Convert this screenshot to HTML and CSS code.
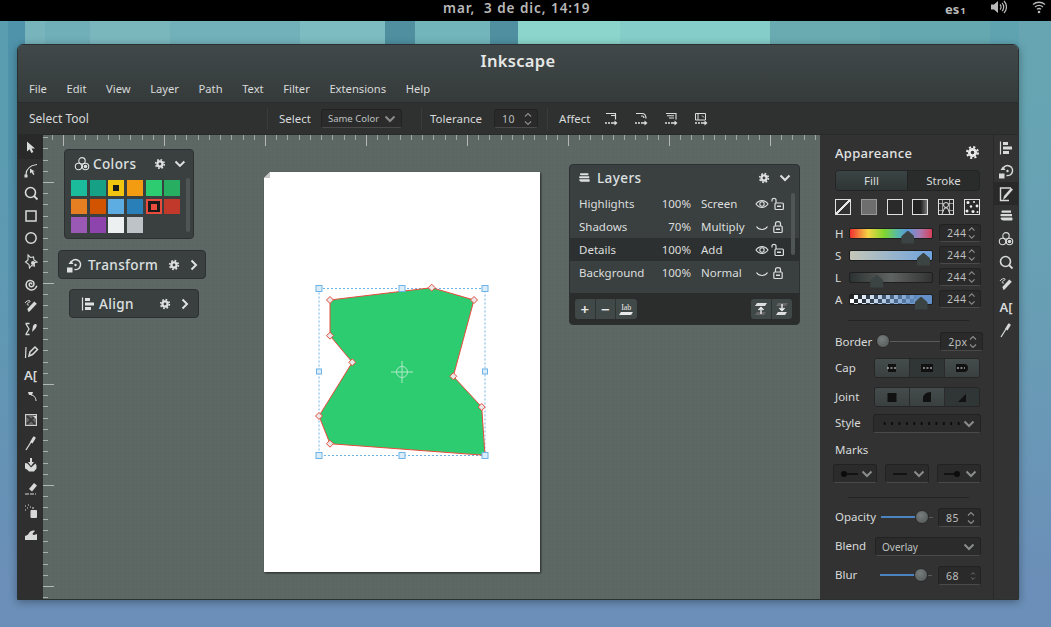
FILE: index.html
```html
<!DOCTYPE html>
<html lang="en">
<head>
  <meta charset="UTF-8">
  <title>Inkscape</title>
  <link rel="stylesheet" href="styles.css">
</head>
<body>
  <svg class="defs" width="0" height="0">
    <symbol id="gear" viewBox="0 0 16 16">
      <circle cx="8" cy="8" r="3.4" fill="none" stroke="currentColor" stroke-width="3"/>
      <circle cx="8" cy="8" r="5.8" fill="none" stroke="currentColor" stroke-width="2.2" stroke-dasharray="2.28 2.28"/>
    </symbol>
    <symbol id="chev-down" viewBox="0 0 12 12">
      <path d="M1.5 3.5 6 8l4.500-4.500" fill="none" stroke="currentColor" stroke-width="2"/>
    </symbol>
    <symbol id="chev-right" viewBox="0 0 12 12">
      <path d="M3.500 1.500 8 6l-4.500 4.500" fill="none" stroke="currentColor" stroke-width="2"/>
    </symbol>
    <symbol id="arrow" viewBox="0 0 16 16">
      <path d="M4 2.500v10l2.600-2.300 1.800 3.800 2-1-1.800-3.600h3.400z" fill="currentColor"/>
    </symbol>
    <symbol id="node" viewBox="0 0 16 16">
      <path d="M3 13C3 8 6 3.500 14 2.500" fill="none" stroke="currentColor" stroke-width="1.200"/>
      <path d="M7 6.500v5l1.500-1.200 1.800 2.700 1.200-.8-1.600-2.700h2z" fill="currentColor"/>
      <rect x="1.500" y="12.500" width="3" height="3" fill="currentColor"/>
    </symbol>
    <symbol id="zoom" viewBox="0 0 16 16">
      <circle cx="7.500" cy="7.500" r="5" fill="none" stroke="currentColor" stroke-width="1.600"/>
      <path d="M11 11l3.500 3.500" stroke="currentColor" stroke-width="1.800"/>
    </symbol>
    <symbol id="rect" viewBox="0 0 16 16">
      <rect x="3" y="3" width="10" height="10" fill="none" stroke="currentColor" stroke-width="1.500"/>
    </symbol>
    <symbol id="circle" viewBox="0 0 16 16">
      <circle cx="8" cy="8" r="5.200" fill="none" stroke="currentColor" stroke-width="1.500"/>
    </symbol>
    <symbol id="star" viewBox="0 0 16 16">
      <path d="M5 2l2.500 2.500 3-.5 .5 3 3 2-3 1 .5 3-3-.5-2 2.500-.5-3.500-3.500-2.500 2.500-2z" fill="none" stroke="currentColor" stroke-width="1.100"/>
      <circle cx="10" cy="10" r="2" fill="currentColor"/>
    </symbol>
    <symbol id="spiral" viewBox="0 0 16 16">
      <path d="M8.500 8.500c.8-1-.8-2.200-2-1-1 1.500.3 3.500 2.200 3.300 2.300-.4 3-3.200 1.600-5C8.500 3.800 5 4 3.600 6.500 2.200 9.400 3.800 13 7 13.800c3 .6 6-1 6.800-4" fill="none" stroke="currentColor" stroke-width="1.500"/>
    </symbol>
    <symbol id="pencil" viewBox="0 0 16 16">
      <path d="M5.500 14l-1.200-3 7-7.500 2.500 2.200-7 7.500z" fill="currentColor"/>
      <path d="M2 5c1-2 4-3 5-2s-3 2-3 3 1 1 2 1" fill="none" stroke="currentColor"/>
    </symbol>
    <symbol id="bezier" viewBox="0 0 16 16">
      <path d="M2.500 2.500h4M2.500 13.500h4M3 3l3 5-3 5" fill="none" stroke="currentColor" stroke-width="1.300"/>
      <path d="M9 11l1-6c1-2 3-2.500 3.500-1.500s0 3-1.500 4.500z" fill="currentColor"/>
    </symbol>
    <symbol id="pen" viewBox="0 0 16 16">
      <path d="M3 3l-.5 11" fill="none" stroke="currentColor" stroke-width="1.200"/>
      <path d="M6 12l1-4 5-5 2.500 2.500-5 5z" fill="none" stroke="currentColor" stroke-width="1.500"/>
    </symbol>
    <symbol id="measure" viewBox="0 0 16 16">
      <path d="M5 3h5l-1 3H6z" fill="currentColor"/>
      <path d="M8 6c3 0 5 3 5 6" fill="none" stroke="currentColor"/>
    </symbol>
    <symbol id="gradient" viewBox="0 0 16 16">
      <rect x="2.500" y="2.500" width="11" height="11" fill="#6a6a6a" stroke="#cfcfcf"/>
      <path d="M4 4l8 8M12 4l-8 8" stroke="#3a3a3a" stroke-width="2"/>
      <path d="M10 4h3v3z" fill="#ddd"/>
    </symbol>
    <symbol id="dropper" viewBox="0 0 16 16">
      <path d="M3 15l5-8" stroke="currentColor" stroke-width="1.300"/>
      <path d="M7 7l3-5c1-1 3 0 2.500 1.500L9.500 8.500z" fill="currentColor"/>
    </symbol>
    <symbol id="bucket" viewBox="0 0 16 16">
      <path d="M7 1h2v4h2l-3 4-3-4h2z" fill="currentColor"/>
      <path d="M2 6l2.500.5 3.500 4 4.500-4 1 2v3l-2.500 3H6l-2-2-2-1z" fill="currentColor"/>
    </symbol>
    <symbol id="eraser" viewBox="0 0 16 16">
      <path d="M6 9l5-6 3 2.500-5 6z" fill="currentColor"/>
      <path d="M2 14h11" stroke="currentColor" stroke-dasharray="4 1"/>
    </symbol>
    <symbol id="spray" viewBox="0 0 16 16">
      <rect x="7.500" y="7" width="6.500" height="8" rx="1" fill="currentColor"/>
      <path d="M2 3h1M4 5h1M2 7h1M5 2h1M7 4h1M9 5h2" stroke="currentColor"/>
    </symbol>
    <symbol id="wave" viewBox="0 0 16 16">
      <path d="M2 15v-4c2-1 3-1 4-3s4-3 6-2l-2 2c-1 1 0 2 1 2l3-1v6z" fill="currentColor"/>
    </symbol>
    <symbol id="align" viewBox="0 0 16 16">
      <path d="M2.500 1.500v13" stroke="currentColor" stroke-width="1.200"/>
      <path d="M5 2h5v3H5zM5 6.500h9v3H5zM5 11h6v3H5z" fill="currentColor"/>
    </symbol>
    <symbol id="transform" viewBox="0 0 16 16">
      <path d="M5 5.500a5 5 0 1 1 3.500 7" fill="none" stroke="currentColor" stroke-width="1.500"/>
      <path d="M2.500 7h5L5 3.500z" fill="currentColor"/>
      <circle cx="9.500" cy="8" r="1.200" fill="currentColor"/>
      <rect x="1" y="10.500" width="5.500" height="5" fill="currentColor"/>
    </symbol>
    <symbol id="fillstroke" viewBox="0 0 16 16">
      <path d="M13 2H2.500v12.500H11" fill="none" stroke="currentColor" stroke-width="1.400"/>
      <path d="M5 14l1-4 7-8 2 1.500-7 8z" fill="currentColor"/>
    </symbol>
    <symbol id="layers" viewBox="0 0 16 16">
      <path d="M4.500 2.500h8.500v2.300H4.500C3 4.800 3 2.500 4.500 2.500zM3.500 5.900H14v2.400H3.500C2 8.300 2 5.900 3.500 5.900zM3.500 9.400H14c.8 1 .8 2 0 3H5.500c-2.500 0-4-3-2-3z" fill="currentColor"/>
    </symbol>
    <symbol id="colors" viewBox="0 0 16 16">
      <circle cx="8" cy="4.800" r="3.200" fill="none" stroke="currentColor" stroke-width="1.100"/>
      <circle cx="4.500" cy="10.500" r="3.200" fill="none" stroke="currentColor" stroke-width="1.100"/>
      <circle cx="11.500" cy="10.500" r="3.200" fill="none" stroke="currentColor" stroke-width="1.100"/>
      <circle cx="11.500" cy="10.500" r="1.800" fill="currentColor"/>
    </symbol>
    <symbol id="eye" viewBox="0 0 14 14">
      <path d="M1 7c3-4.500 9-4.500 12 0-3 4.500-9 4.500-12 0z" fill="none" stroke="currentColor" stroke-width="1.100"/>
      <circle cx="7" cy="7" r="2.200" fill="none" stroke="currentColor" stroke-width="1.100"/>
    </symbol>
    <symbol id="eye-off" viewBox="0 0 14 14">
      <path d="M1.500 6.500c2.500 4 8.500 4 11 0" fill="none" stroke="currentColor" stroke-width="1.100"/>
    </symbol>
    <symbol id="lock" viewBox="0 0 14 14">
      <path d="M4.500 6V3.500c0-2.500 5-2.500 5 0V6" fill="none" stroke="currentColor" stroke-width="1.200"/>
      <rect x="2.800" y="6" width="8.400" height="6.500" rx="1" fill="none" stroke="currentColor" stroke-width="1.200"/>
      <path d="M5 9.200h4" stroke="currentColor" stroke-width="1.500"/>
    </symbol>
    <symbol id="unlock" viewBox="0 0 14 14">
      <path d="M1 4.500V2.800c0-2 4-2 4 0V6" fill="none" stroke="currentColor" stroke-width="1.200"/>
      <rect x="4" y="6" width="8.400" height="6.500" rx="1" fill="none" stroke="currentColor" stroke-width="1.200"/>
      <path d="M6 9.200h4" stroke="currentColor" stroke-width="1.500"/>
    </symbol>
    <symbol id="affect-a" viewBox="0 0 14 14">
      <path d="M2 1.500h10M7 3.500h5M11.500 1.500v6" fill="none" stroke="currentColor" stroke-width="1.200"/>
      <path d="M1 11h2M4 11h2M7 11h4" stroke="currentColor" stroke-width="1.300"/>
      <path d="M10.500 8.500l3 2.500-3 2.500z" fill="currentColor"/>
    </symbol>
    <symbol id="affect-b" viewBox="0 0 14 14">
      <path d="M2 1.500h6c3 0 4 2 4 5M7 4h1c2 0 2 1 2 2" fill="none" stroke="currentColor" stroke-width="1.200"/>
      <path d="M1 11h2M4 11h2M7 11h4" stroke="currentColor" stroke-width="1.300"/>
      <path d="M10.500 8.500l3 2.500-3 2.500z" fill="currentColor"/>
    </symbol>
    <symbol id="affect-c" viewBox="0 0 14 14">
      <path d="M2 1.500h10v6M3 3.800h7M5 6h5" fill="none" stroke="currentColor" stroke-width="1.100"/>
      <path d="M1 11h2M4 11h2M7 11h4" stroke="currentColor" stroke-width="1.300"/>
      <path d="M10.500 8.500l3 2.500-3 2.500z" fill="currentColor"/>
    </symbol>
    <symbol id="affect-d" viewBox="0 0 14 14">
      <path d="M1.500 1.500h10v6.500h-10zM4 1.500v6.500M8 3.500l2 2" fill="none" stroke="currentColor" stroke-width="1"/>
      <path d="M1 11h2M4 11h2M7 11h4" stroke="currentColor" stroke-width="1.300"/>
      <path d="M10.500 8.500l3 2.500-3 2.500z" fill="currentColor"/>
    </symbol>
    <symbol id="spin" viewBox="0 0 10 16">
      <path d="M2 5.500l3-3 3 3M2 10.500l3 3 3-3" fill="none" stroke="currentColor" stroke-width="1.200"/>
    </symbol>
  </svg>

  <div class="topbar">
    <span class="clock">mar,&nbsp; 3 de dic, 14:19</span>
    <span class="keyboard">es<small>1</small></span>
    <svg class="tray-volume" viewBox="0 0 16 14" width="16" height="14">
      <path d="M0 4.500h3L7 1v12L3 9.500H0z" fill="currentColor"/>
      <path d="M9 4.500a3.500 3.500 0 0 1 0 5M11 2.800a6 6 0 0 1 0 8.400M13 1a8.500 8.500 0 0 1 0 12" fill="none" stroke="currentColor" stroke-width="1.200"/>
    </svg>
    <svg class="tray-wifi" viewBox="0 0 14 14" width="14" height="14">
      <path d="M1 4.500c3.500-3 8.500-3 12 0M3 7c2.500-2 5.500-2 8 0M5 9.300c1.300-1 2.700-1 4 0" fill="none" stroke="currentColor" stroke-width="1.300"/>
      <circle cx="7" cy="12" r="1.300" fill="currentColor"/>
    </svg>
  </div>

  <div class="desktop">
    <div class="window">
      <div class="header">
        <div class="title">Inkscape</div>
        <div class="menu">
          <span>File</span><span>Edit</span><span>View</span><span>Layer</span><span>Path</span><span>Text</span><span>Filter</span><span>Extensions</span><span>Help</span>
        </div>
      </div>

      <div class="toolbar">
        <span class="tool-name">Select Tool</span>
        <span class="divider"></span>
        <span class="tb-label">Select</span>
        <div class="combo combo-same"><span>Same Color</span><svg class="caret"><use href="#chev-down"/></svg></div>
        <span class="divider divider-2"></span>
        <span class="tb-label">Tolerance</span>
        <div class="spin spin-tol"><span>10</span><svg class="spin-arrows"><use href="#spin"/></svg></div>
        <span class="divider divider-3"></span>
        <span class="tb-label">Affect</span>
        <div class="affect">
          <svg><use href="#affect-a"/></svg>
          <svg><use href="#affect-b"/></svg>
          <svg><use href="#affect-c"/></svg>
          <svg><use href="#affect-d"/></svg>
        </div>
      </div>

      <div class="main">
        <div class="tools">
          <div class="tool active"><svg><use href="#arrow"/></svg></div>
          <div class="tool"><svg><use href="#node"/></svg></div>
          <div class="tool"><svg><use href="#zoom"/></svg></div>
          <div class="tool"><svg><use href="#rect"/></svg></div>
          <div class="tool"><svg><use href="#circle"/></svg></div>
          <div class="tool"><svg><use href="#star"/></svg></div>
          <div class="tool"><svg><use href="#spiral"/></svg></div>
          <div class="tool"><svg><use href="#pencil"/></svg></div>
          <div class="tool"><svg><use href="#bezier"/></svg></div>
          <div class="tool"><svg><use href="#pen"/></svg></div>
          <div class="tool tool-text">A[</div>
          <div class="tool"><svg><use href="#measure"/></svg></div>
          <div class="tool"><svg><use href="#gradient"/></svg></div>
          <div class="tool"><svg><use href="#dropper"/></svg></div>
          <div class="tool"><svg><use href="#bucket"/></svg></div>
          <div class="tool"><svg><use href="#eraser"/></svg></div>
          <div class="tool"><svg><use href="#spray"/></svg></div>
          <div class="tool"><svg><use href="#wave"/></svg></div>
        </div>

        <div class="canvas">
          <div class="ruler-top"></div>
          <div class="ruler-left"></div>

          <div class="page-shadow">
            <div class="page">
              <svg class="drawing" viewBox="264 172 276 400">
                <path class="fold" d="M264 178h6v-6z"/>
                <rect x="319" y="288.500" width="166" height="167" fill="none" stroke="#6db3e8" stroke-dasharray="2 2"/>
                <path class="shape" d="M330 300 431.700 287.700 474 300 453.300 376.300 481.700 407 485 455.300 330 443.700 319 416 352.300 362.300 330 335.700z"/>
                <g class="cross">
                  <circle cx="402" cy="372" r="5.500"/>
                  <path d="M391 372h22M402 361v22"/>
                </g>
                <g class="nodes">
                  <path d="M330 296.500l3.500 3.500-3.500 3.500-3.500-3.500z"/>
                  <path d="M431.700 284.200l3.500 3.500-3.500 3.500-3.500-3.500z"/>
                  <path d="M474 296.500l3.500 3.500-3.500 3.500-3.500-3.500z"/>
                  <path d="M453.300 372.800l3.500 3.500-3.500 3.500-3.500-3.500z"/>
                  <path d="M481.700 403.500l3.500 3.500-3.500 3.500-3.500-3.500z"/>
                  <path d="M330 440.200l3.500 3.500-3.500 3.500-3.500-3.500z"/>
                  <path d="M319 412.500l3.500 3.500-3.500 3.500-3.500-3.500z"/>
                  <path d="M352.300 358.800l3.500 3.500-3.500 3.500-3.500-3.500z"/>
                  <path d="M330 332.200l3.500 3.500-3.500 3.500-3.500-3.500z"/>
                </g>
                <g class="handles">
                  <rect x="316" y="285.500" width="6" height="6"/>
                  <rect x="399" y="285.500" width="6" height="6"/>
                  <rect x="482" y="285.500" width="6" height="6"/>
                  <rect x="316.500" y="369" width="5" height="5"/>
                  <rect x="482.500" y="369" width="5" height="5"/>
                  <rect x="316" y="452.500" width="6" height="6"/>
                  <rect x="399" y="452.500" width="6" height="6"/>
                  <rect x="482" y="452.500" width="6" height="6"/>
                </g>
              </svg>
            </div>
          </div>

          <div class="float colors-panel">
            <div class="float-head">
              <svg class="head-ico"><use href="#colors"/></svg>
              <span class="float-title">Colors</span>
              <svg class="gear"><use href="#gear"/></svg>
              <svg class="chev"><use href="#chev-down"/></svg>
            </div>
            <div class="swatches">
              <i class="sw sw-1"></i><i class="sw sw-2"></i><i class="sw sw-3 marked"></i><i class="sw sw-4"></i><i class="sw sw-5"></i><i class="sw sw-6"></i>
              <i class="sw sw-7"></i><i class="sw sw-8"></i><i class="sw sw-9"></i><i class="sw sw-10"></i><i class="sw sw-11 picked"></i><i class="sw sw-12"></i>
              <i class="sw sw-13"></i><i class="sw sw-14"></i><i class="sw sw-15"></i><i class="sw sw-16"></i>
            </div>
            <div class="scroll colors-scroll"></div>
          </div>

          <div class="float pill transform-panel">
            <svg class="head-ico"><use href="#transform"/></svg>
            <span class="float-title">Transform</span>
            <svg class="gear"><use href="#gear"/></svg>
            <svg class="chev"><use href="#chev-right"/></svg>
          </div>

          <div class="float pill align-panel">
            <svg class="head-ico"><use href="#align"/></svg>
            <span class="float-title">Align</span>
            <svg class="gear"><use href="#gear"/></svg>
            <svg class="chev"><use href="#chev-right"/></svg>
          </div>

          <div class="float layers-panel">
            <div class="float-head">
              <svg class="head-ico"><use href="#layers"/></svg>
              <span class="float-title">Layers</span>
              <svg class="gear"><use href="#gear"/></svg>
              <svg class="chev"><use href="#chev-down"/></svg>
            </div>
            <div class="layer-list">
              <div class="layer"><span class="l-name">Highlights</span><span class="l-pct">100%</span><span class="l-mode">Screen</span><svg><use href="#eye"/></svg><svg><use href="#unlock"/></svg></div>
              <div class="layer"><span class="l-name">Shadows</span><span class="l-pct">70%</span><span class="l-mode">Multiply</span><svg><use href="#eye-off"/></svg><svg><use href="#lock"/></svg></div>
              <div class="layer selected"><span class="l-name">Details</span><span class="l-pct">100%</span><span class="l-mode">Add</span><svg><use href="#eye"/></svg><svg><use href="#unlock"/></svg></div>
              <div class="layer"><span class="l-name">Background</span><span class="l-pct">100%</span><span class="l-mode">Normal</span><svg><use href="#eye-off"/></svg><svg><use href="#lock"/></svg></div>
              <div class="scroll layers-scroll"></div>
            </div>
            <div class="layer-foot">
              <div class="btn-group">
                <button>+</button><button>&minus;</button><button class="btn-iab"><span>Iab</span><i></i></button>
              </div>
              <div class="btn-group">
                <button>
                  <svg viewBox="0 0 16 16" width="16" height="16"><path d="M4 2h10l-2 3H2z" fill="#ddd"/><path d="M4 11h9l-2 3H2z" fill="#666"/><path d="M8 13V7M5.500 9 8 6.500 10.500 9" fill="none" stroke="#eee" stroke-width="1.400"/></svg>
                </button><button>
                  <svg viewBox="0 0 16 16" width="16" height="16"><path d="M4 2h10l-2 3H2z" fill="#666"/><path d="M4 11h9l-2 3H2z" fill="#ddd"/><path d="M8 3v6M5.500 7 8 9.500 10.500 7" fill="none" stroke="#eee" stroke-width="1.400"/></svg>
                </button>
              </div>
            </div>
          </div>
        </div>

        <div class="panel">
          <div class="panel-head">
            <span class="panel-title">Appareance</span>
            <svg class="gear-big"><use href="#gear"/></svg>
          </div>
          <div class="tabs"><span class="tab active">Fill</span><span class="tab">Stroke</span></div>
          <div class="paints">
            <i class="paint p-none"></i><i class="paint p-flat"></i><i class="paint p-dark"></i><i class="paint p-grad"></i>
            <svg class="paint" viewBox="0 0 14 14"><rect width="14" height="14" fill="#2a2a2a"/><path d="M0 3.500h14M0 10.500h14M3.500 0v14M10.500 0v14" stroke="#bbb" stroke-width=".8"/><circle cx="7" cy="5" r="2.500" fill="#2a2a2a" stroke="#ddd"/><path d="M3 14l2.500-6h3L11 14" fill="#2a2a2a" stroke="#ddd"/></svg>
            <svg class="paint" viewBox="0 0 14 14"><rect width="14" height="14" fill="#2a2a2a"/><g fill="#eee"><circle cx="3" cy="2.500" r="1.500"/><circle cx="9" cy="2" r="1"/><circle cx="12" cy="6" r="1.400"/><circle cx="6" cy="6.500" r="1.200"/><circle cx="2" cy="11" r="1.500"/><circle cx="8" cy="11.500" r="1.500"/><circle cx="12.500" cy="12" r="1"/></g></svg>
          </div>
          <div class="channels">
            <div class="channel"><span class="ch-label">H</span><div class="bar bar-h"><i class="thumb" style="left:70%"></i></div><div class="spin"><span>244</span><svg class="spin-arrows"><use href="#spin"/></svg></div></div>
            <div class="channel"><span class="ch-label">S</span><div class="bar bar-s"><i class="thumb" style="left:89%"></i></div><div class="spin"><span>244</span><svg class="spin-arrows"><use href="#spin"/></svg></div></div>
            <div class="channel"><span class="ch-label">L</span><div class="bar bar-l"><i class="thumb" style="left:32%"></i></div><div class="spin"><span>244</span><svg class="spin-arrows"><use href="#spin"/></svg></div></div>
            <div class="channel"><span class="ch-label">A</span><div class="bar bar-a"><i class="thumb" style="left:86%"></i></div><div class="spin"><span>244</span><svg class="spin-arrows"><use href="#spin"/></svg></div></div>
          </div>
          <div class="sep sep-1"></div>

          <div class="prop prop-border">
            <span>Border</span>
            <div class="slider slider-border"><i class="knob" style="left:2%"></i></div>
            <div class="spin"><span>2px</span><svg class="spin-arrows"><use href="#spin"/></svg></div>
          </div>
          <div class="prop prop-cap">
            <span>Cap</span>
            <div class="seg">
              <button><svg viewBox="0 0 16 10" width="16" height="10"><rect x="4" y="1" width="8" height="8" fill="#111"/><path d="M3 5h10" stroke="#eee" stroke-dasharray="2 1.500"/></svg></button>
              <button class="on"><svg viewBox="0 0 16 10" width="16" height="10"><rect x="2" y="1" width="12" height="8" fill="#111"/><path d="M4 5h9" stroke="#eee" stroke-dasharray="2 1.500"/></svg></button>
              <button><svg viewBox="0 0 16 10" width="16" height="10"><path d="M2 1h8a4 4 0 0 1 0 8H2z" fill="#111"/><path d="M3 5h8" stroke="#eee" stroke-dasharray="2 1.500"/></svg></button>
            </div>
          </div>
          <div class="prop prop-joint">
            <span>Joint</span>
            <div class="seg">
              <button><svg viewBox="0 0 12 10" width="12" height="10"><rect x="1.500" y="1" width="9" height="9" fill="#111"/></svg></button>
              <button><svg viewBox="0 0 12 10" width="12" height="10"><path d="M2 10V6c0-3 3-6 8-6v10z" fill="#111"/></svg></button>
              <button class="on"><svg viewBox="0 0 12 10" width="12" height="10"><path d="M2 10 10 2v8z" fill="#111"/></svg></button>
            </div>
          </div>
          <div class="prop prop-style">
            <span>Style</span>
            <div class="combo combo-style"><span class="dots"></span><svg class="caret"><use href="#chev-down"/></svg></div>
          </div>
          <div class="marks-label">Marks</div>
          <div class="marks">
            <div class="combo"><svg class="mark" viewBox="0 0 20 8"><circle cx="5" cy="4" r="3" fill="#0c0c0c"/><path d="M5 4h14" stroke="#0c0c0c" stroke-width="1.500"/></svg><svg class="caret"><use href="#chev-down"/></svg></div>
            <div class="combo"><svg class="mark" viewBox="0 0 20 8"><path d="M2 4h14" stroke="#0c0c0c" stroke-width="1.500"/></svg><svg class="caret"><use href="#chev-down"/></svg></div>
            <div class="combo"><svg class="mark" viewBox="0 0 20 8"><circle cx="14" cy="4" r="3" fill="#0c0c0c"/><path d="M1 4h13" stroke="#0c0c0c" stroke-width="1.500"/></svg><svg class="caret"><use href="#chev-down"/></svg></div>
          </div>
          <div class="sep sep-2"></div>
          <div class="prop prop-opacity">
            <span>Opacity</span>
            <div class="slider slider-blue"><i class="fill"></i><i class="knob" style="left:78%"></i></div>
            <div class="spin"><span>85</span><svg class="spin-arrows"><use href="#spin"/></svg></div>
          </div>
          <div class="prop prop-blend">
            <span>Blend</span>
            <div class="combo combo-blend"><span>Overlay</span><svg class="caret"><use href="#chev-down"/></svg></div>
          </div>
          <div class="prop prop-blur">
            <span>Blur</span>
            <div class="slider slider-blue"><i class="fill"></i><i class="knob" style="left:78%"></i></div>
            <div class="spin"><span>68</span><svg class="spin-arrows"><use href="#spin"/></svg></div>
          </div>
        </div>

        <div class="strip">
          <div class="tool"><svg><use href="#align"/></svg></div>
          <div class="tool"><svg><use href="#transform"/></svg></div>
          <div class="tool active"><svg><use href="#fillstroke"/></svg></div>
          <div class="tool"><svg><use href="#layers"/></svg></div>
          <div class="tool"><svg><use href="#colors"/></svg></div>
          <div class="tool"><svg><use href="#zoom"/></svg></div>
          <div class="tool"><svg><use href="#pencil"/></svg></div>
          <div class="tool tool-text">A[</div>
          <div class="tool"><svg><use href="#dropper"/></svg></div>
        </div>
      </div>
    </div>
  </div>
</body>
</html>
```

FILE: styles.css
```css
* {
  box-sizing: border-box;
}
html, body {
  margin: 0;
  height: 627px;
  overflow: hidden;
}
body {
  font-family: "Noto Sans", sans-serif;
  font-size: 11.5px;
  color: #d8dada;
  display: flex;
  flex-direction: column;
  background: #000;
}
.defs {
  position: absolute;
}
svg {
  display: block;
}
i {
  display: block;
  font-style: normal;
}

/* top bar */
.topbar {
  height: 21px;
  background: #000;
  color: #b9b9b9;
  position: relative;
  flex: none;
}
.clock {
  position: absolute;
  left: 443px;
  top: 0;
  font-weight: 600;
  font-size: 13.5px;
  line-height: 17px;
  letter-spacing: 0.95px;
}
.keyboard {
  position: absolute;
  left: 945px;
  top: 1px;
  font-weight: 700;
  font-size: 13px;
  line-height: 17px;
}
.keyboard small {
  font-size: 9.5px;
  margin-left: 1px;
}
.tray-volume {
  position: absolute;
  left: 991px;
  top: 0;
}
.tray-wifi {
  position: absolute;
  left: 1032px;
  top: 0;
}

/* desktop */
.desktop {
  flex: 1;
  padding: 23px 32px 27px 17px;
  background:
    linear-gradient(180deg, rgba(107, 143, 184, 0) 12%, rgba(107, 143, 184, 0.35) 50%, #6b8fb8 92%),
    linear-gradient(90deg, #5a9db0 0 8px, #4f93aa 8px 25px, #78b4bc 25px 45px, #70aeb8 45px 90px, #7ab7bd 90px 170px, #72b1ba 170px 300px, #7dbcc0 300px 385px, #4f8fa0 385px 415px, #72b5bb 415px 490px, #4f8fa0 490px 518px, #8bd5cc 518px 620px, #84cdc8 620px 770px, #6aabb2 770px 880px, #66a8b0 880px 990px, #5fa3b1 990px 1019px, #67a5b3 1019px);
}
.window {
  height: 556px;
  display: flex;
  flex-direction: column;
  border: 1px solid #2b3131;
  border-radius: 6px 6px 0 0;
  overflow: hidden;
  box-shadow: 0 2px 8px rgba(0, 0, 0, 0.35);
}
.header {
  height: 58px;
  background: linear-gradient(180deg, #414849, #353b3b);
  border-bottom: 1px solid #2a2d2d;
  flex: none;
}
.title {
  text-align: center;
  font-size: 16.5px;
  font-weight: 600;
  line-height: 20px;
  padding-top: 6px;
  height: 26px;
  color: #e6e8e8;
  letter-spacing: 0.3px;
}
.menu {
  display: flex;
  gap: 19.6px;
  padding-left: 11px;
  font-size: 11.2px;
  line-height: 24px;
  margin-top: 6px;
}

/* toolbar */
.toolbar {
  height: 32px;
  background: #2f3131;
  border-bottom: 1px solid #282a2a;
  display: flex;
  align-items: center;
  padding-left: 11px;
  flex: none;
}
.tool-name {
  width: 238px;
  font-size: 12px;
}
.divider {
  width: 1px;
  height: 22px;
  background: #3a3c3c;
  margin-right: 11px;
}
.divider-2 {
  margin-left: 19px;
  margin-right: 8px;
}
.divider-3 {
  margin-left: 9px;
  margin-right: 11px;
}
.tb-label {
  margin-right: 10px;
}
.combo {
  display: flex;
  align-items: center;
  justify-content: space-between;
  height: 19px;
  padding: 0 5px 0 6px;
  background: #2b2b2b;
  border: 1px solid #222;
  border-bottom-color: #4a4a4a;
  border-radius: 3px;
  font-size: 9.5px;
  color: #bfc1c1;
}
.combo-same {
  width: 81px;
}
.caret {
  width: 12px;
  height: 12px;
  color: #8a8c8c;
}
.spin {
  width: 43px;
  height: 19px;
  display: flex;
  align-items: center;
  justify-content: space-between;
  padding: 0 4px 0 7px;
  background: #2a2a2a;
  border: 1px solid #222;
  border-bottom-color: #4a4a4a;
  border-radius: 3px;
  font-size: 10.5px;
  letter-spacing: 0.5px;
  color: #bdbfbf;
  flex: none;
}
.spin-arrows {
  width: 10px;
  height: 16px;
  color: #8a8c8c;
}
.spin-tol {
  width: 44px;
  margin-left: 2px;
}
.affect {
  display: flex;
  gap: 16px;
  margin-left: 4px;
  color: #dcdede;
}
.affect svg {
  width: 14px;
  height: 14px;
}

/* main */
.main {
  flex: 1;
  display: flex;
  min-height: 0;
}
.tools {
  width: 25px;
  background: #2f2f2f;
  flex: none;
}
.tool {
  height: 22.7px;
  display: flex;
  align-items: center;
  justify-content: center;
  color: #d8dada;
}
.tool svg {
  width: 16px;
  height: 16px;
}
.tools .tool.active {
  background: #292929;
  height: 24px;
}
.tool-text {
  font-size: 13px;
  font-weight: 600;
}

/* canvas */
.canvas {
  position: relative;
  width: 777px;
  flex: none;
  overflow: hidden;
  background-color: #5d6764;
  background-image: radial-gradient(#5b6562 1px, transparent 1.2px);
  background-size: 4px 4px;
}
.ruler-top {
  position: absolute;
  left: 0;
  right: 0;
  top: 0;
  height: 11px;
  background:
    repeating-linear-gradient(90deg, #b3b8b6 0 1px, transparent 1px 101px) 20px 0 / 101px 11px repeat-x,
    repeating-linear-gradient(90deg, #a2a7a5 0 1px, transparent 1px 11.22px) 20px 0 / 101px 5px repeat-x;
}
.ruler-left {
  position: absolute;
  left: 0;
  top: 0;
  bottom: 0;
  width: 11px;
  background:
    repeating-linear-gradient(180deg, #b3b8b6 0 1px, transparent 1px 101px) 0 47px / 11px 101px repeat-y,
    repeating-linear-gradient(180deg, #a9aeac 0 1px, transparent 1px 11.22px) 0 47px / 5px 101px repeat-y;
}
.page-shadow {
  position: absolute;
  left: 221px;
  top: 37px;
  filter: drop-shadow(1px 1px 1px rgba(0, 0, 0, 0.6));
}
.page {
  width: 276px;
  height: 400px;
  background: #fff;
  clip-path: polygon(6px 0, 100% 0, 100% 100%, 0 100%, 0 6px);
}
.drawing {
  width: 276px;
  height: 400px;
}
.fold {
  fill: #c8c8c8;
}
.shape {
  fill: #2ecc71;
  stroke: #e74c3c;
  stroke-width: 1;
}
.cross {
  fill: none;
  stroke: #aee9c8;
  stroke-width: 1;
}
.nodes path {
  fill: #e8e8e8;
  stroke: #e74c3c;
}
.handles rect {
  fill: #d9ecf8;
  stroke: #6db3e8;
}

/* floating panels */
.float {
  position: absolute;
  background: #3a4040;
  border: 1px solid #2c3030;
  border-radius: 4px;
  color: #dfe1e1;
}
.float-title {
  font-size: 13.5px;
  font-weight: 500;
  letter-spacing: 0.4px;
}
.head-ico {
  width: 16px;
  height: 16px;
  flex: none;
}
.gear {
  width: 12px;
  height: 12px;
}
.chev {
  width: 12px;
  height: 12px;
}
.float-head {
  display: flex;
  align-items: center;
  height: 26px;
}
.colors-panel {
  left: 21px;
  top: 14px;
  width: 130px;
  height: 90px;
}
.colors-panel .float-head {
  padding: 0 7px 0 9px;
  margin-top: 1px;
}
.colors-panel .float-title {
  margin-left: 3px;
  width: 62px;
}
.colors-panel .chev {
  margin-left: 8px;
}
.swatches {
  display: grid;
  grid-template-columns: repeat(6, 16px);
  grid-auto-rows: 15.5px;
  gap: 3px 2.7px;
  margin: 3px 0 0 6px;
}
.sw {
  position: relative;
}
.sw-1 { background: #1abc9c; }
.sw-2 { background: #16a085; }
.sw-3 { background: #f1c40f; }
.sw-4 { background: #f39c12; }
.sw-5 { background: #2ecc71; }
.sw-6 { background: #27ae60; }
.sw-7 { background: #e67e22; }
.sw-8 { background: #d35400; }
.sw-9 { background: #5dade2; }
.sw-10 { background: #2980b9; }
.sw-11 { background: #e74c3c; }
.sw-12 { background: #c0392b; }
.sw-13 { background: #9b59b6; }
.sw-14 { background: #8e44ad; }
.sw-15 { background: #ecf0f1; }
.sw-16 { background: #bdc3c7; }
.marked::after {
  content: "";
  position: absolute;
  left: 5px;
  top: 5px;
  width: 6px;
  height: 6px;
  background: #1a1a1a;
}
.picked {
  background: #1a1a1a;
  border: 2px solid #e74c3c;
}
.picked::after {
  content: "";
  position: absolute;
  left: 3px;
  top: 3px;
  width: 6px;
  height: 6px;
  background: #e74c3c;
}
.scroll {
  position: absolute;
  background: #4f5454;
  border-radius: 2px;
  width: 4px;
}
.colors-scroll {
  left: 121px;
  top: 28px;
  height: 54px;
}
.pill {
  display: flex;
  align-items: center;
  height: 29px;
  padding-left: 7px;
}
.transform-panel {
  left: 15px;
  top: 115px;
  width: 148px;
}
.transform-panel .float-title {
  margin-left: 6px;
  width: 80px;
}
.transform-panel .chev {
  margin-left: 8px;
}
.align-panel {
  left: 26px;
  top: 154px;
  width: 130px;
  padding-left: 10px;
}
.align-panel .float-title {
  margin-left: 3px;
  width: 60px;
}
.align-panel .chev {
  margin-left: 8px;
}
.layers-panel {
  left: 526px;
  top: 29px;
  width: 231px;
  height: 161px;
  overflow: hidden;
}
.layers-panel .float-head {
  padding: 0 8px 0 7px;
}
.layers-panel .head-ico {
  width: 14px;
  height: 14px;
}
.layers-panel .float-title {
  margin-left: 6px;
  flex: 1;
}
.layers-panel .chev {
  margin-left: 9px;
}
.layer-list {
  position: relative;
  height: 102px;
  padding-top: 1px;
}
.layer {
  display: flex;
  align-items: center;
  height: 23px;
  padding-left: 9px;
  font-size: 11.5px;
  color: #dcdede;
}
.layer.selected {
  background: #2d3030;
}
.layer svg {
  width: 14px;
  height: 14px;
  margin-left: 2px;
}
.l-name {
  width: 73px;
}
.l-pct {
  width: 39px;
  text-align: right;
}
.l-mode {
  width: 52px;
  margin-left: 10px;
}
.layers-scroll {
  left: 221px;
  top: 2px;
  height: 62px;
}
.layer-foot {
  height: 32px;
  background: #2b2d2d;
  display: flex;
  align-items: center;
  justify-content: space-between;
  padding: 0 7px 0 5px;
}
.btn-group {
  display: flex;
  border-radius: 3px;
  overflow: hidden;
}
.btn-group button {
  width: 20.500px;
  height: 20px;
  padding: 0;
  border: 0;
  border-right: 1px solid #2f3333;
  background: #414848;
  color: #e8e8e8;
  font: 600 15px/20px "Noto Sans", sans-serif;
  display: flex;
  align-items: center;
  justify-content: center;
}
.btn-group button:last-child {
  border-right: 0;
}
.btn-iab {
  flex-direction: column;
}
.btn-group .btn-iab span {
  font: 8px/9px "Liberation Serif", serif;
  color: #e8e8e8;
}
.btn-iab i {
  width: 12px;
  height: 3px;
  background: #e8e8e8;
  transform: skewX(-30deg);
}

/* right panel */
.panel {
  width: 174px;
  flex: none;
  background: #323232;
  padding: 0 12px 0 15px;
  border-right: 1px solid #292929;
}
.panel-head {
  display: flex;
  align-items: center;
  justify-content: space-between;
  height: 35px;
  padding-right: 1px;
}
.panel-title {
  font-size: 13px;
  font-weight: 500;
  letter-spacing: 0.3px;
  color: #e2e4e4;
}
.gear-big {
  width: 15px;
  height: 15px;
  color: #e8e8e8;
}
.tabs {
  display: flex;
  width: 145px;
  height: 21px;
  border: 1px solid #232525;
  border-radius: 4px;
  overflow: hidden;
  text-align: center;
  line-height: 19px;
  background: #2a2c2c;
}
.tab {
  flex: 1;
}
.tab.active {
  background: linear-gradient(180deg, #3b4444, #2f3535);
  border-right: 1px solid #232525;
}
.paints {
  display: flex;
  justify-content: space-between;
  width: 145px;
  margin-top: 8px;
  height: 16px;
}
.paint {
  width: 16px;
  height: 16px;
  border: 1px solid #e0e0e0;
}
.p-none {
  background: linear-gradient(135deg, transparent 46%, #e8e8e8 46% 54%, transparent 54%);
}
.p-flat {
  background: #6e6e6e;
  border-color: #9a9a9a;
}
.p-dark {
  background: #2a2a2a;
}
.p-grad {
  background: linear-gradient(90deg, #222 55%, #777);
}
.channels {
  margin-top: 9px;
  display: flex;
  flex-direction: column;
  gap: 4px;
}
.channel {
  display: flex;
  align-items: center;
  height: 18px;
}
.ch-label {
  width: 14px;
  flex: none;
}
.bar {
  position: relative;
  width: 84px;
  height: 11px;
  border: 1px solid #1f1f1f;
  border-radius: 2px;
  margin: 0 6px 0 0;
  flex: none;
}
.bar-h {
  background: linear-gradient(90deg, #f03030, #f5d545 22%, #7fd52f 42%, #58b9a8 58%, #5a9ad8 70%, #a87bb5 85%, #d8405a);
}
.bar-s {
  background: linear-gradient(90deg, #c5c7b8, #6fa3de);
}
.bar-l {
  background: linear-gradient(90deg, #2c3232, #5f6361 50%, #333);
}
.bar-a {
  background:
    linear-gradient(90deg, rgba(96, 140, 195, 0), #6390c6 85%),
    conic-gradient(#fff 25%, #222 0 50%, #fff 0 75%, #222 0) 0 0 / 8px 8px;
}
.thumb {
  position: absolute;
  top: 2px;
  width: 13px;
  height: 13px;
  margin-left: -6px;
  background: #3b4443;
  clip-path: polygon(50% 0, 100% 45%, 100% 100%, 0 100%, 0 45%);
}
.channel .spin {
  height: 18px;
  width: 42px;
}
.sep {
  height: 1px;
  width: 121px;
  background: #232323;
  margin-left: 13px;
}
.sep-1 {
  margin-top: 12px;
}
.prop {
  display: flex;
  align-items: center;
  justify-content: space-between;
}
.prop > span:first-child {
  margin-top: -2px;
}
.prop-border {
  height: 19px;
  margin-top: 11px;
}
.prop-border > span:first-child,
.prop-cap > span:first-child {
  margin-top: -1px;
}
.slider {
  position: relative;
  height: 1px;
  background: #5a5c5c;
  flex: none;
}
.slider-border {
  width: 58px;
  margin-left: 10px;
}
.knob {
  position: absolute;
  top: -7px;
  width: 14px;
  height: 14px;
  margin-left: -7px;
  border-radius: 50%;
  background: radial-gradient(circle at 40% 35%, #777d7d, #505555);
  border: 1px solid #2a2a2a;
}
.slider-blue {
  width: 52px;
}
.slider-blue .fill {
  height: 2px;
  margin-top: -1px;
  width: 78%;
  background: #4a83c0;
}
.seg {
  display: flex;
  width: 106px;
  height: 20px;
  margin-right: 1px;
  border-radius: 3px;
  overflow: hidden;
  border: 1px solid #262626;
}
.seg button {
  flex: 1;
  padding: 0;
  border: 0;
  border-right: 1px solid #2a2a2a;
  background: linear-gradient(180deg, #454c4c, #3a4040);
  display: flex;
  align-items: center;
  justify-content: center;
}
.seg button.on {
  background: #303535;
}
.seg button:last-child {
  border-right: 0;
}
.prop-cap {
  height: 20px;
  margin-top: 7px;
}
.prop-joint {
  height: 20px;
  margin-top: 9px;
}
.prop-style {
  height: 19px;
  margin-top: 7px;
}
.combo-style {
  width: 108px;
}
.dots {
  width: 82px;
  height: 3px;
  background: radial-gradient(circle, #0c0c0c 1.2px, transparent 1.4px) 0 0 / 7.4px 3px repeat-x;
  margin-left: 1px;
}
.marks-label {
  margin-top: 8px;
  line-height: 18px;
  height: 23px;
}
.marks {
  display: flex;
  gap: 8px;
  margin-left: -2px;
}
.marks .combo {
  width: 44px;
  padding: 0 3px 0 5px;
}
.mark {
  width: 20px;
  height: 8px;
}
.sep-2 {
  margin-top: 14px;
}
.prop-opacity {
  height: 19px;
  margin-top: 10px;
}
.prop-blend {
  height: 19px;
  margin-top: 10px;
}
.combo-blend {
  width: 106px;
  font-size: 10px;
}
.prop-blur {
  height: 19px;
  margin-top: 10px;
}
.prop-blur span:first-child {
  width: 39px;
}

/* right strip */
.strip {
  width: 24px;
  background: #333;
  padding-top: 2px;
  flex: none;
}
.strip .tool {
  height: 22.7px;
}
.strip .tool.active {
  background: #292929;
}
```
